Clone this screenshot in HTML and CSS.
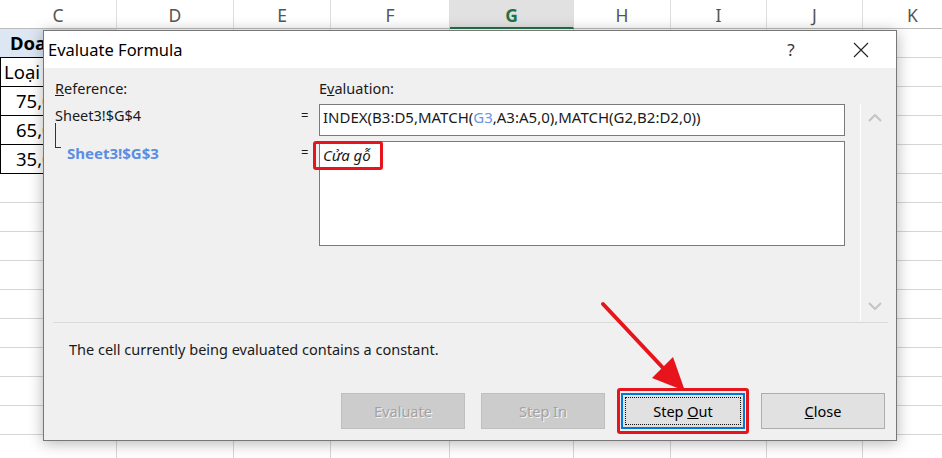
FILE: index.html
```
<!DOCTYPE html>
<html lang="vi">
<head>
    <meta charset="UTF-8">
    <title>Evaluate Formula</title>
    <link rel="stylesheet" href="styles.css">
</head>
<body>
    <div class="sheet" id="sheet">
        <div class="sheet-row">
            <div class="cell col-head">C</div>
            <div class="cell col-head">D</div>
            <div class="cell col-head">E</div>
            <div class="cell col-head">F</div>
            <div class="cell col-head active">G</div>
            <div class="cell col-head">H</div>
            <div class="cell col-head">I</div>
            <div class="cell col-head">J</div>
            <div class="cell col-head">K</div>
        </div>
    </div>

    <div class="dialog">
        <div class="titlebar">
            <span class="title">Evaluate Formula</span>
            <span class="tb-btn">?</span>
            <span class="tb-btn">
                <svg width="16" height="16" viewBox="0 0 16 16">
                    <path d="M1 1 L15 15 M15 1 L1 15" stroke="#222" stroke-width="1.1" fill="none"/>
                </svg>
            </span>
        </div>

        <div class="dlg-body">
            <div class="eval-grid">
                <div class="label"><u>R</u>eference:</div>
                <div></div>
                <div class="label">E<u>v</u>aluation:</div>
                <div></div>

                <div class="ref">Sheet3!$G$4</div>
                <div class="eq">=</div>
                <div class="eval-box">INDEX(B3:D5,MATCH(<span class="blue">G3</span>,A3:A5,0),MATCH(G2,B2:D2,0))</div>
                <div class="scroll">
                    <svg width="14" height="8" viewBox="0 0 14 8"><path d="M1 7 L7 1 L13 7" stroke="#c4c4c4" stroke-width="2" fill="none"/></svg>
                    <svg width="14" height="8" viewBox="0 0 14 8"><path d="M1 1 L7 7 L13 1" stroke="#c4c4c4" stroke-width="2" fill="none"/></svg>
                </div>

                <div class="ref tree-item">
                    <span class="connector"></span>
                    <span class="child-ref">Sheet3!$G$3</span>
                </div>
                <div class="eq">=</div>
                <div class="eval-box tall"><span class="mark">Cửa gỗ</span></div>
            </div>

            <div class="separator"></div>

            <p class="message">The cell currently being evaluated contains a constant.</p>

            <div class="buttons">
                <button class="btn" disabled>Evaluate</button>
                <button class="btn" disabled>Step In</button>
                <button class="btn focused marked">Step <u>O</u>ut</button>
                <button class="btn"><u>C</u>lose</button>
            </div>
        </div>
    </div>

    <svg class="arrow" width="942" height="458" viewBox="0 0 942 458">
        <line x1="603" y1="304" x2="665" y2="370" stroke="#e8141b" stroke-width="4" stroke-linecap="round"/>
        <polygon points="652,378 673,357 685,391" fill="#e8141b"/>
    </svg>

    <script>
        // Rows under the header: only column C has table content
        const colC = [
            { text: 'Doanh thu', cls: 'tbl head-cell' },
            { text: 'Loại', cls: 'tbl edge' },
            { text: '75,000', cls: 'tbl edge num' },
            { text: '65,000', cls: 'tbl edge num' },
            { text: '35,000', cls: 'tbl edge num' }
        ];
        const sheet = document.getElementById('sheet');

        for (let r = 0; r < 15; r++) {
            const row = document.createElement('div');
            row.className = 'sheet-row';
            for (let c = 0; c < 9; c++) {
                const cell = document.createElement('div');
                cell.className = 'cell';
                if (c === 0 && colC[r]) {
                    cell.className += ' ' + colC[r].cls;
                    cell.textContent = colC[r].text;
                }
                row.appendChild(cell);
            }
            sheet.appendChild(row);
        }
    </script>
</body>
</html>
```

FILE: styles.css
```
* {
    margin: 0;
    padding: 0;
    box-sizing: border-box;
}

body {
    width: 942px;
    height: 458px;
    overflow: hidden;
    position: relative;
    background: #fff;
    font-family: "Segoe UI", "Noto Sans", sans-serif;
    color: #000;
}

/* spreadsheet behind the dialog */
.sheet-row {
    display: grid;
    grid-template-columns: 117px 117px 97px 119px 124px 97px 96px 96px 100px;
    height: 29px;
}

.cell {
    border-right: 1px solid #d6d6d6;
    border-bottom: 1px solid #d6d6d6;
    font-size: 18.5px;
    line-height: 28px;
    white-space: nowrap;
    overflow: hidden;
}

.col-head {
    text-align: center;
    font-size: 17.5px;
    color: #555;
    padding-top: 3px;
    line-height: 24px;
    border-bottom-color: #bcbcbc;
    border-right-color: #dedede;
}

.col-head.active {
    background: #e1e1e1;
    color: #217346;
    font-weight: bold;
    border-bottom: 2px solid #217346;
}

.tbl {
    border-bottom-color: #000;
}

.edge {
    border-left: 1px solid #000;
    padding-left: 3px;
}

.head-cell {
    background: #dde7f4;
    font-weight: bold;
    padding-left: 10px;
}

.num {
    padding-left: 15px;
}

/* dialog window */
.dialog {
    position: absolute;
    left: 43px;
    top: 30px;
    width: 854px;
    height: 411px;
    background: #f0f0f0;
    border: 1px solid #777;
    box-shadow: 0 2px 14px rgba(0, 0, 0, 0.3);
    display: flex;
    flex-direction: column;
}

.titlebar {
    height: 37px;
    background: #fff;
    display: flex;
    align-items: center;
    padding-left: 4px;
    flex-shrink: 0;
}

.title {
    flex: 1;
    font-size: 16.5px;
    color: #000;
}

.tb-btn {
    width: 70px;
    height: 37px;
    display: flex;
    align-items: center;
    justify-content: center;
    font-size: 17px;
    color: #333;
}

.dlg-body {
    flex: 1;
    display: flex;
    flex-direction: column;
    padding: 10px 0 11px 11px;
    font-size: 14.5px;
    color: #1a1a1a;
}

.eval-grid {
    display: grid;
    grid-template-columns: 244px 20px 526px 1fr;
    grid-template-rows: 21px 32px auto;
    row-gap: 5px;
}

.label {
    line-height: 21px;
}

.ref {
    line-height: 22px;
}

.eq {
    line-height: 22px;
    font-size: 13px;
    padding-left: 2px;
}

.eval-box {
    height: 32px;
    background: #fff;
    border: 1px solid #7a7a7a;
    padding: 0 3px;
    font-size: 15px;
    line-height: 24px;
    white-space: nowrap;
    overflow: hidden;
}

.eval-box.tall {
    height: 105px;
    align-self: start;
    font-style: italic;
    padding-top: 2px;
    line-height: 22px;
    overflow: visible;
}

.blue {
    color: #6b94e0;
}

.tree-item {
    display: flex;
    align-items: flex-start;
}

.connector {
    width: 6px;
    height: 25px;
    margin-top: -18px;
    margin-right: 6px;
    border-left: 1px solid #333;
    border-bottom: 1px solid #333;
    flex-shrink: 0;
}

.child-ref {
    color: #5b8de3;
    font-weight: bold;
    font-size: 15px;
    line-height: 24px;
}

.mark {
    position: relative;
}

.mark::after {
    content: "";
    position: absolute;
    left: -10px;
    right: -12px;
    top: -4px;
    bottom: -5px;
    border: 3px solid #e8141b;
    border-radius: 3px;
}

.scroll {
    grid-column: 4;
    grid-row: 2 / span 2;
    height: 217px;
    width: 28px;
    margin-left: 15px;
    border-left: 1px solid #fff;
    display: flex;
    flex-direction: column;
    justify-content: space-between;
    align-items: center;
    padding: 10px 0 11px;
}

.separator {
    height: 1px;
    background: #dadada;
    margin: 1px 8px 0 -2px;
}

.message {
    margin-top: 15px;
    padding-left: 14px;
    line-height: 22px;
    font-size: 14.5px;
}

.buttons {
    margin-top: auto;
    display: flex;
    justify-content: flex-end;
    gap: 16px;
    padding-right: 11px;
}

.btn {
    width: 124px;
    height: 36px;
    font-family: inherit;
    font-size: 14.5px;
    color: #000;
    background: #e1e1e1;
    border: 1px solid #adadad;
    position: relative;
}

.btn:disabled {
    background: #cccccc;
    border-color: #bfbfbf;
    color: #a2a2a2;
    text-shadow: 1px 1px 0 #f4f4f4;
}

.btn.focused {
    border: 2px solid #0078d7;
    outline: 1px dotted #111;
    outline-offset: -5px;
}

.btn.marked::after {
    content: "";
    position: absolute;
    left: -6px;
    right: -6px;
    top: -7px;
    bottom: -7px;
    border: 3px solid #e8141b;
    border-radius: 3px;
}

.arrow {
    position: absolute;
    left: 0;
    top: 0;
    pointer-events: none;
}
```
